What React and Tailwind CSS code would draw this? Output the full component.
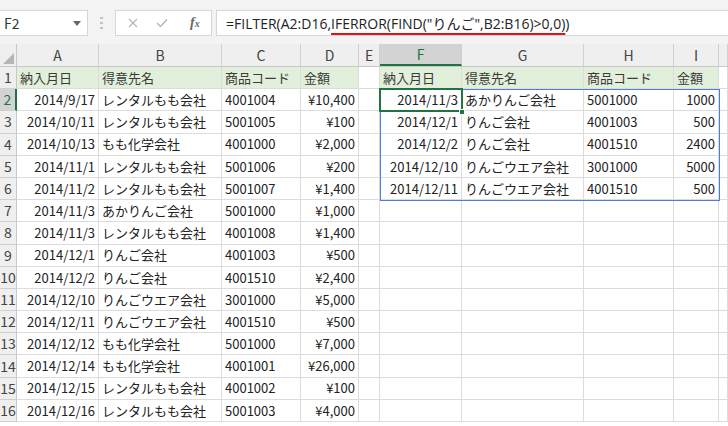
const COLS = [
  "w-[17px]",
  "w-[82px]",
  "w-[123px]",
  "w-[79px]",
  "w-[58px]",
  "w-[21px]",
  "w-[82px]",
  "w-[122px]",
  "w-[90px]",
  "w-[45px]",
  "w-[9px]",
];

const LETTERS = ["", "A", "B", "C", "D", "E", "F", "G", "H", "I", ""];

// alignment for A..J
const ALIGN = ["", "justify-end", "justify-start", "justify-start", "justify-end", "", "justify-end", "justify-start", "justify-start", "justify-end", ""];

const HEAD = ["納入月日", "得意先名", "商品コード", "金額"];

const LEFT = [
  ["2014/9/17", "レンタルもも会社", "4001004", "¥10,400"],
  ["2014/10/11", "レンタルもも会社", "5001005", "¥100"],
  ["2014/10/13", "もも化学会社", "4001000", "¥2,000"],
  ["2014/11/1", "レンタルもも会社", "5001006", "¥200"],
  ["2014/11/2", "レンタルもも会社", "5001007", "¥1,400"],
  ["2014/11/3", "あかりんご会社", "5001000", "¥1,000"],
  ["2014/11/3", "レンタルもも会社", "4001008", "¥1,400"],
  ["2014/12/1", "りんご会社", "4001003", "¥500"],
  ["2014/12/2", "りんご会社", "4001510", "¥2,400"],
  ["2014/12/10", "りんごウエア会社", "3001000", "¥5,000"],
  ["2014/12/11", "りんごウエア会社", "4001510", "¥500"],
  ["2014/12/12", "もも化学会社", "5001000", "¥7,000"],
  ["2014/12/14", "もも化学会社", "4001001", "¥26,000"],
  ["2014/12/15", "レンタルもも会社", "4001002", "¥100"],
  ["2014/12/16", "レンタルもも会社", "5001003", "¥4,000"],
];

const RIGHT = [
  ["2014/11/3", "あかりんご会社", "5001000", "1000"],
  ["2014/12/1", "りんご会社", "4001003", "500"],
  ["2014/12/2", "りんご会社", "4001510", "2400"],
  ["2014/12/10", "りんごウエア会社", "3001000", "5000"],
  ["2014/12/11", "りんごウエア会社", "4001510", "500"],
];

const rows = [];
rows.push([...HEAD, "", ...HEAD, ""]);
LEFT.forEach((r, i) => {
  const rr = RIGHT[i] || ["", "", "", ""];
  rows.push([...r, "", ...rr, ""]);
});

const Toolbar = () => (
  <div className="h-[44px] bg-[#f3f3f3] flex items-start pt-[10px]">
    <div className="w-[88px] h-[26px] bg-white border-y border-r border-[#d6d6d6] flex items-center justify-between pl-[4px] pr-[6px] text-[14px] text-[#333]">
      <span>F2</span>
      <svg width="8" height="5" viewBox="0 0 8 5"><path d="M0 0h8L4 5z" fill="#666" /></svg>
    </div>
    <div className="w-[27px] h-[26px] flex items-center justify-center">
      <svg width="3" height="12" viewBox="0 0 3 12">
        <rect x="0" y="0" width="3" height="2" fill="#c4c4c4" />
        <rect x="0" y="5" width="3" height="2" fill="#c4c4c4" />
        <rect x="0" y="10" width="3" height="2" fill="#c4c4c4" />
      </svg>
    </div>
    <div className="w-[97px] h-[26px] bg-white border border-[#d6d6d6] flex items-center pl-[12px] gap-[18px]">
      <svg width="10" height="10" viewBox="0 0 10 10"><path d="M1 1l8 8M9 1l-8 8" stroke="#b8b8b8" strokeWidth="1.3" /></svg>
      <svg width="12" height="10" viewBox="0 0 12 10"><path d="M1 5l3.5 3.5L11 1.5" stroke="#b8b8b8" strokeWidth="1.5" fill="none" /></svg>
      <span className="ml-[4px] font-['Liberation_Serif',serif] italic text-[14px] text-[#666] font-bold leading-none">
        f<span className="text-[10px]">x</span>
      </span>
    </div>
    <div className="flex-1 h-[26px] ml-[4px] bg-white border-y border-l border-[#d6d6d6] flex items-center pl-[9px] text-[14px] text-[#222] font-['Open_Sans','Noto_Sans_CJK_JP',sans-serif] whitespace-nowrap">
      <span>=FILTER(A2:D16,</span>
      <span className="underline decoration-[#e81010] decoration-2 underline-offset-[4px]">IFERROR(FIND("りんご",B2:B16)&gt;0,0)</span>
      <span>)</span>
    </div>
  </div>
);

const HeaderRow = () => (
  <div className="flex h-[23px] bg-[#efefef] border-b border-[#c8c8c8]">
    {COLS.map((w, i) => {
      if (i === 0) {
        return (
          <div key={i} className={`${w} shrink-0 border-r border-[#c8c8c8] flex items-end justify-end p-[2px]`}>
            <svg width="11" height="11" viewBox="0 0 11 11"><path d="M11 0V11H0z" fill="#b5b5b5" /></svg>
          </div>
        );
      }
      const sel = i === 6;
      return (
        <div
          key={i}
          className={`${w} shrink-0 border-r border-[#d0d0d0] flex items-center justify-center text-[14px] ${
            sel ? "bg-[#d3d3d3] text-[#217346] border-b-2 border-b-[#217346]" : "text-[#444]"
          }`}
        >
          {LETTERS[i]}
        </div>
      );
    })}
  </div>
);

const Row = ({ n, cells }) => (
  <div className="flex h-[22.2px]">
    <div
      className={`${COLS[0]} shrink-0 flex items-center justify-center text-[14px] border-b border-[#d0d0d0] ${
        n === 2
          ? "bg-[#d3d3d3] text-[#217346] border-r-2 border-r-[#217346]"
          : "bg-[#efefef] text-[#444] border-r border-r-[#c8c8c8]"
      }`}
    >
      {n}
    </div>
    {cells.map((c, i) => {
      const col = i + 1;
      const head = n === 1;
      const green = head && col !== 5 && col !== 10;
      return (
        <div
          key={i}
          className={`${COLS[col]} shrink-0 flex items-center px-[3px] overflow-visible whitespace-nowrap border-r border-b border-[#dcdcdc] ${
            head ? "justify-start text-[#3a3a3a]" : `${ALIGN[col]} text-[#222]`
          } ${green ? "bg-[#e2efda]" : "bg-white"}`}
        >
          {c}
        </div>
      );
    })}
  </div>
);

export default function App() {
  return (
    <div className="w-[728px] h-[426px] overflow-hidden bg-white font-['Noto_Sans_CJK_JP',sans-serif] text-[13px]">
      <Toolbar />
      <HeaderRow />
      <div className="relative">
        {rows.map((r, i) => (
          <Row key={i} n={i + 1} cells={r} />
        ))}
        {/* spill range F2:I6 */}
        <div className="absolute left-[380px] top-[22px] w-[340px] h-[112px] border border-[#4a7fd6] pointer-events-none" />
        {/* active cell F2 */}
        <div className="absolute left-[379px] top-[21px] w-[84px] h-[24px] border-2 border-[#217346] pointer-events-none" />
        <div className="absolute left-[459px] top-[42px] w-[6px] h-[6px] bg-[#217346] border border-white pointer-events-none" />
      </div>
    </div>
  );
}
